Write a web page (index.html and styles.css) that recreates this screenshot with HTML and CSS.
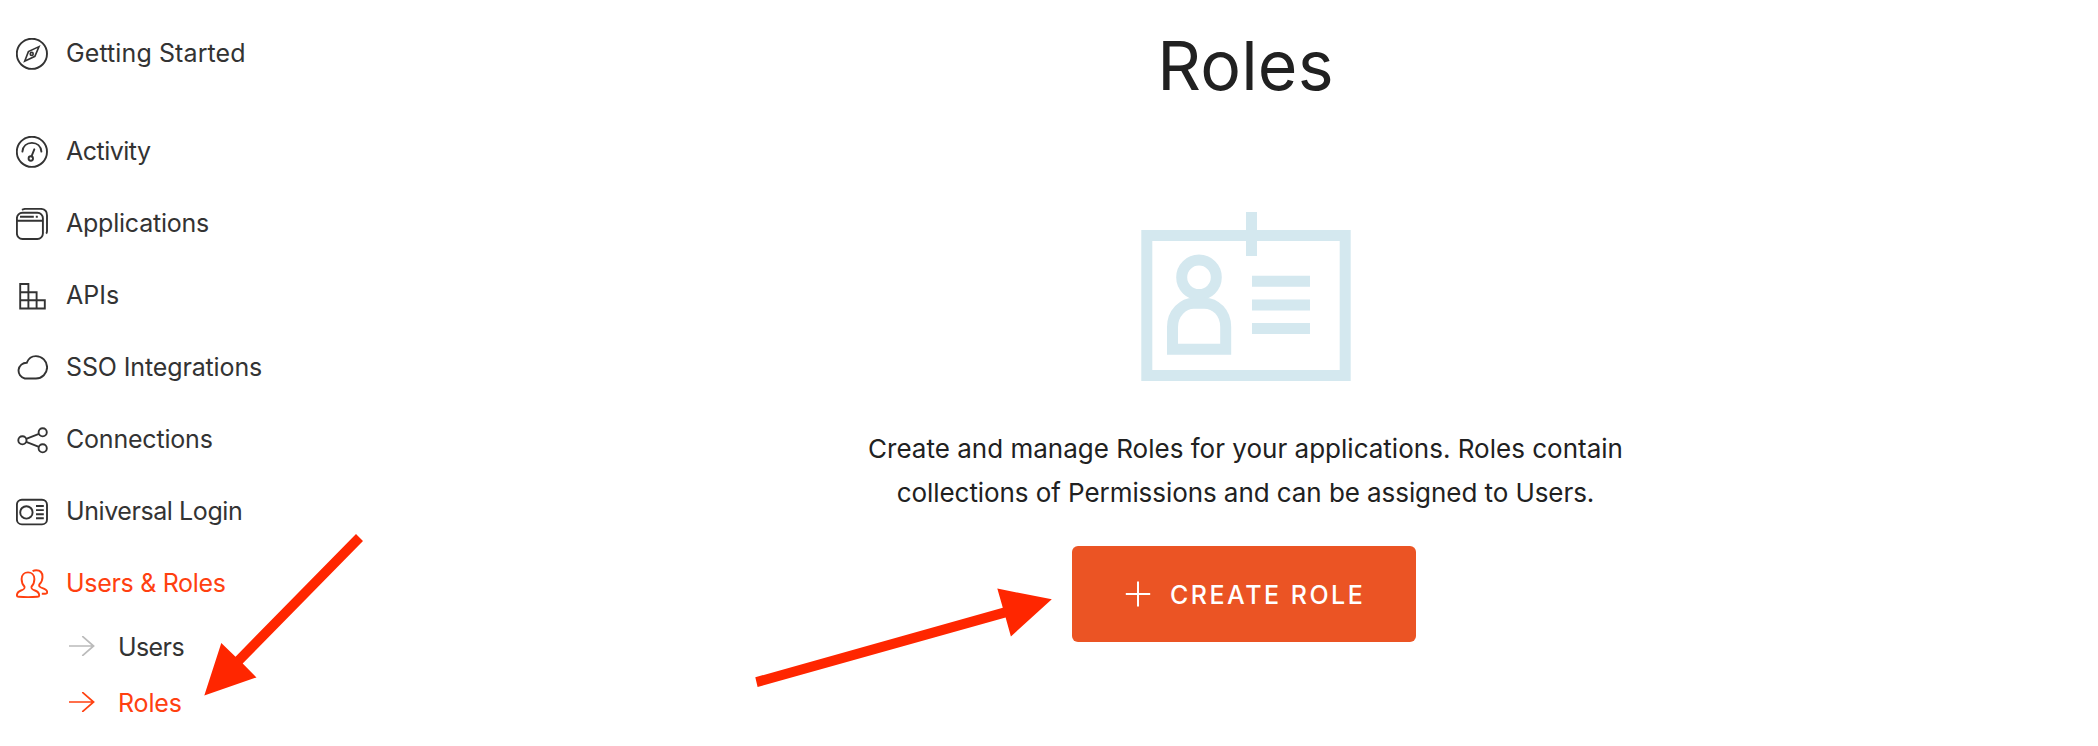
FILE: index.html
```
<!DOCTYPE html>
<html lang="en">
<head>
<meta charset="utf-8">
<title>Roles</title>
<link rel="stylesheet" href="styles.css">
</head>
<body>
<div class="page">
  <nav class="sidebar">
    <a class="item item-first">
      <svg class="icon" viewBox="0 0 32 32"><circle cx="15.9" cy="15.8" r="15.1"/><path class="thin" d="M23 8.6 12.4 13.6 8.7 23.2 18.9 18.3Z"/><circle class="thin" cx="15.7" cy="15.9" r="1.5"/></svg>
      <span class="label getting">Getting Started</span>
    </a>
    <a class="item">
      <svg class="icon" viewBox="0 0 32 32"><circle cx="15.9" cy="15.8" r="15.1"/><path class="round" d="M6.4 15.6C6.9 10.2 10.8 6.9 15.9 6.9S24.9 10.2 25.4 15.6M18.3 13.3 15.5 20.3"/><circle cx="14.8" cy="22.5" r="2.2"/></svg>
      <span class="label activity">Activity</span>
    </a>
    <a class="item">
      <svg class="icon" viewBox="0 0 32 32"><rect x=".9" y="4.8" width="26" height="26.2" rx="5.5"/><path d="M.8 12.7H27M4 8.8H17.8M19.8 8.8H21.8M6 1.9C7 1.2 8 .9 9.5 .9H24.5Q31 .9 31 7.4V23Q31 24.6 30.2 25.6"/></svg>
      <span class="label apps">Applications</span>
    </a>
    <a class="item">
      <svg class="icon" viewBox="0 0 32 32"><path d="M4.2 4H12.4V28.5H4.2ZM4.2 12.2H20.6V28.5M4.2 20.3H28.8V28.5H12.4"/></svg>
      <span class="label">APIs</span>
    </a>
    <a class="item">
      <svg class="icon" viewBox="0 0 32 32"><path d="M8.8 26.5A8 8 0 0 1 10.8 10.7C12.4 6.6 15.8 4.1 19.9 4.1A11.2 11.2 0 0 1 19.9 26.5Z"/></svg>
      <span class="label sso">SSO Integrations</span>
    </a>
    <a class="item">
      <svg class="icon" viewBox="0 0 32 32"><circle cx="6.4" cy="16.3" r="4.1"/><circle cx="26.7" cy="8.3" r="4.1"/><circle cx="26.7" cy="24.3" r="4.1"/><path d="M10.2 14.8 22.9 9.8M10.2 17.8 22.9 22.8"/></svg>
      <span class="label conn">Connections</span>
    </a>
    <a class="item">
      <svg class="icon" viewBox="0 0 32 32"><rect x=".9" y="3.8" width="30.1" height="24.6" rx="5"/><circle cx="10.4" cy="16.4" r="6.2"/><path d="M20 10H27.8M20 14.1H27.8M20 18.2H27.8M20 22.3H27.8"/></svg>
      <span class="label login">Universal Login</span>
    </a>
    <a class="item active">
      <svg class="icon" viewBox="0 0 32 32"><path d="M.9 27.4C.9 24.4 2 23.6 5 22.5C8.4 21.4 9 20.6 8.4 18.5C6.2 16.2 5.6 13.6 5.6 11C5.6 6.7 8.5 4.4 12 4.4S18.4 6.7 18.4 11C18.4 13.6 17.8 16.2 15.6 18.5C15 20.6 15.6 21.4 19 22.5C22 23.6 23.2 24.4 23.2 27.4C23.2 28.4 22.6 28.7 21.4 28.8Q12 29.5 2.7 28.8C1.5 28.7 .9 28.4 .9 27.4Z"/><path d="M16.6 3.1C17.8 2.5 19 2.3 20.2 2.3C24 2.3 26.5 4.8 26.5 9C26.5 11.8 25.6 14.2 23.5 16.2C22.6 18.1 23.6 19.2 26.5 20.1C29.8 21.1 31.2 22 31.2 24.3C31.2 25.7 30 25.8 25.8 25.7"/></svg>
      <span class="label ur">Users &amp; Roles</span>
    </a>
    <div class="sub">
      <a class="subitem">
        <svg class="arrow muted" viewBox="0 0 26 20"><path d="M.6 10H24.6M13.8 .6 24.6 10 13.8 19.4"/></svg>
        <span class="sublabel users">Users</span>
      </a>
      <a class="subitem active">
        <svg class="arrow" viewBox="0 0 26 20"><path d="M.6 10H24.6M13.8 .6 24.6 10 13.8 19.4"/></svg>
        <span class="sublabel roles">Roles</span>
      </a>
    </div>
  </nav>
  <main class="main">
    <h1 class="title">Roles</h1>
    <svg class="badge" viewBox="0 0 210 169">
      <rect x="5.8" y="23.5" width="198.4" height="140"/>
      <path d="M110.5 0V44M111 69.2H169M111 92.9H169M111 116.6H169"/>
      <circle cx="58" cy="65.3" r="17.3"/>
      <path d="M31.5 137.2V115C31.5 101 42 91.2 53 91.2H63C75 91.2 84.7 101 84.7 115V137.2Z"/>
    </svg>
    <p class="text"><span class="line1">Create and manage Roles for your applications. Roles contain</span><br><span class="line2">collections of Permissions and can be assigned to Users.</span></p>
    <button class="create">
      <svg class="plus" viewBox="0 0 26 26"><path d="M13 .5V25.5M.8 13H25.2"/></svg>
      <span>CREATE ROLE</span>
    </button>
  </main>
  <svg class="pointers" viewBox="0 0 2098 746">
    <path d="M204.3 695.5 221.3 643 235.5 656.7 356 534 363 541 242.7 663.6 256.5 677.4Z"/>
    <path d="M1051.8 599.2 997.3 588.6 1002.8 607.8 755.3 677.3 757.6 687 1005.6 617.4 1010.9 636.5Z"/>
  </svg>
</div>
</body>
</html>
```

FILE: styles.css
```
body {
  margin: 0;
  background: #fff;
  font-family: Inter, "Liberation Sans", sans-serif;
}
.page {
  position: relative;
  display: flex;
  height: 746px;
  overflow: hidden;
}
.sidebar {
  box-sizing: border-box;
  width: 393px;
  padding: 18px 0 0 16px;
  color: #333;
  font-size: 25px;
}
.item {
  display: flex;
  align-items: center;
  gap: 18px;
  height: 72px;
}
.item-first { margin-bottom: 26px; }
.icon {
  width: 32px;
  height: 32px;
  fill: none;
  stroke: currentColor;
  stroke-width: 1.9;
}
.icon .thin { stroke-width: 1.6; }
.icon .round { stroke-linecap: round; }
.label {
  padding-bottom: 2px;
  line-height: 32px;
  white-space: nowrap;
}
.getting { letter-spacing: 0.1px; }
.activity { letter-spacing: -0.5px; }
.apps { letter-spacing: -0.22px; }
.sso { letter-spacing: -0.13px; }
.conn { letter-spacing: -0.2px; }
.login { letter-spacing: -0.42px; }
.ur { letter-spacing: -0.31px; }
.users { letter-spacing: -0.6px; }
.roles { letter-spacing: -0.15px; }
.active { color: #ff4010; }
.sub {
  margin-top: -2px;
  padding-left: 53px;
}
.subitem {
  display: flex;
  align-items: center;
  gap: 23px;
  height: 56px;
}
.sublabel { line-height: 32px; padding-top: 2px; }
.arrow {
  width: 26px;
  height: 20px;
  fill: none;
  stroke: currentColor;
  stroke-width: 1.7;
  stroke-linecap: round;
}
.muted { color: #bbb; }
.main {
  flex: 1;
  display: flex;
  flex-direction: column;
  align-items: center;
  padding-top: 23px;
  color: #212121;
}
.title {
  margin: 0 0 105px;
  font-size: 68px;
  font-weight: 400;
  line-height: 84px;
  letter-spacing: 0.2px;
}
.badge {
  width: 210px;
  height: 169px;
  fill: none;
  stroke: #d4e8ef;
  stroke-width: 11;
}
.text {
  margin: 46px 0 31px;
  font-size: 26px;
  line-height: 44px;
  text-align: center;
  white-space: nowrap;
}
.line1 { letter-spacing: 0.01px; }
.line2 { letter-spacing: -0.07px; }
.create {
  display: flex;
  align-items: center;
  gap: 19px;
  box-sizing: border-box;
  width: 344px;
  height: 96px;
  margin-right: 3px;
  padding: 0 0 0 53px;
  border: 0;
  border-radius: 6px;
  background: #eb5424;
  color: #fff;
  font: 500 25px Inter, "Liberation Sans", sans-serif;
  letter-spacing: 2.5px;
  white-space: nowrap;
}
.create span { padding-top: 2px; }
.plus {
  width: 26px;
  height: 26px;
  fill: none;
  stroke: #fff;
  stroke-width: 2;
}
.pointers {
  position: absolute;
  inset: 0;
  width: 2098px;
  height: 746px;
  fill: #ff2600;
  pointer-events: none;
}
```
